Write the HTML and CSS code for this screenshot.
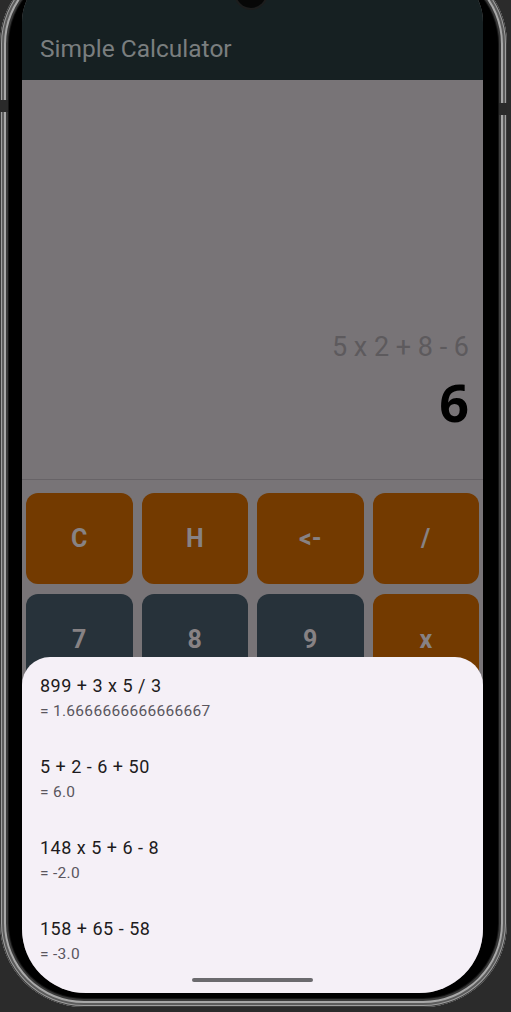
FILE: index.html
```html
<!DOCTYPE html>
<html lang="en">
<head>
<meta charset="utf-8">
<title>Simple Calculator</title>
<link rel="stylesheet" href="styles.css">
</head>
<body>
<div class="phone">
  <span class="side-key side-key-left"></span>
  <span class="side-key side-key-right"></span>
  <div class="screen">
    <header class="appbar">
      <h1 class="title">Simple Calculator</h1>
    </header>
    <section class="display">
      <div class="expression">5 x 2 + 8 - 6</div>
      <div class="result">6</div>
    </section>
    <section class="keypad">
      <button class="key key-op">C</button>
      <button class="key key-op">H</button>
      <button class="key key-op">&lt;-</button>
      <button class="key key-op">/</button>
      <button class="key key-num">7</button>
      <button class="key key-num">8</button>
      <button class="key key-num">9</button>
      <button class="key key-op">x</button>
    </section>
    <div class="camera"></div>
    <aside class="sheet">
      <ul class="history">
        <li class="entry">
          <div class="entry-expr">899 + 3 x 5 / 3</div>
          <div class="entry-result">= 1.6666666666666667</div>
        </li>
        <li class="entry">
          <div class="entry-expr">5 + 2 - 6 + 50</div>
          <div class="entry-result">= 6.0</div>
        </li>
        <li class="entry">
          <div class="entry-expr">148 x 5 + 6 - 8</div>
          <div class="entry-result">= -2.0</div>
        </li>
        <li class="entry">
          <div class="entry-expr">158 + 65 - 58</div>
          <div class="entry-result">= -3.0</div>
        </li>
      </ul>
      <div class="home-indicator"></div>
    </aside>
  </div>
</div>
</body>
</html>
```
FILE: styles.css
```css
html, body {
  margin: 0;
  padding: 0;
}

body {
  width: 511px;
  height: 1012px;
  overflow: hidden;
  background: #2b2b2b;
  font-family: Roboto, "Liberation Sans", sans-serif;
}

.phone {
  position: relative;
  width: 507px;
  height: 1047px;
  margin-top: -40px;
  box-sizing: border-box;
  padding: 10px 24px 14px 22px;
  background: #000;
  border-radius: 84px;
  box-shadow:
    inset 0 0 0 1px #3c3c3c,
    inset 0 0 0 2px #a0a0a0,
    inset 0 0 0 4px #5c5c5c,
    inset 0 0 0 6px #a8a8a8,
    inset 0 0 0 8px #3a3a3a,
    inset 0 0 0 9px #151515;
}

.side-key {
  position: absolute;
  width: 8px;
  height: 12px;
  background: #2a2a2a;
}

.side-key-left {
  left: 0;
  top: 140px;
}

.side-key-right {
  right: 0;
  top: 143px;
}

.screen {
  position: relative;
  height: 100%;
  border-radius: 52px 52px 64px 64px;
  overflow: hidden;
  display: flex;
  flex-direction: column;
  background: #787477;
}

.appbar {
  flex: none;
  height: 110px;
  box-sizing: border-box;
  padding: 65px 0 0 18px;
  background: #162022;
}

.title {
  margin: 0;
  font-size: 24.5px;
  line-height: 28px;
  font-weight: 400;
  color: #7a7e7f;
}

.camera {
  position: absolute;
  top: 8px;
  left: 214px;
  width: 30px;
  height: 30px;
  border-radius: 50%;
  background: radial-gradient(circle at 50% 45%, #333 0 3px, #070707 4px 100%);
  box-shadow: 0 0 0 2px #1d1d1d;
}

.display {
  flex: none;
  height: 400px;
  box-sizing: border-box;
  border-bottom: 1px solid #676367;
  padding: 0 14px 47px;
  display: flex;
  flex-direction: column;
  justify-content: flex-end;
  align-items: flex-end;
}

.expression {
  font-size: 27px;
  line-height: 32px;
  color: #5d5a5d;
  margin-bottom: 9px;
}

.result {
  font-family: "Noto Sans", "Open Sans", sans-serif;
  font-weight: 700;
  font-size: 52px;
  line-height: 60px;
  color: #000;
}

.keypad {
  flex: none;
  display: grid;
  grid-template-columns: repeat(4, 1fr);
  grid-auto-rows: 91px;
  column-gap: 9px;
  row-gap: 10px;
  padding: 13px 4px 0;
}

.key {
  border: 0;
  border-radius: 12px;
  font-family: Roboto, "Liberation Sans", sans-serif;
  font-weight: 700;
  font-size: 25px;
  color: #878284;
  padding: 0;
}

.key-op {
  background: #733a00;
}

.key-num {
  background: #27323a;
}

.sheet {
  position: absolute;
  top: 687px;
  left: 0;
  right: 0;
  bottom: 0;
  background: #f5f0f7;
  border-radius: 28px 28px 0 0;
}

.history {
  list-style: none;
  margin: 0;
  padding: 17px 18px 0;
  display: flex;
  flex-direction: column;
  gap: 34px;
}

.entry-expr {
  font-size: 18px;
  line-height: 24px;
  letter-spacing: 0.5px;
  color: #1d1b20;
}

.entry-result {
  margin-top: 3px;
  font-size: 15.5px;
  line-height: 20px;
  letter-spacing: 0.3px;
  color: #5a565e;
}

.home-indicator {
  position: absolute;
  left: 50%;
  bottom: 11px;
  width: 121px;
  height: 4px;
  margin-left: -60.5px;
  border-radius: 2px;
  background: #6b6a6e;
}
```
